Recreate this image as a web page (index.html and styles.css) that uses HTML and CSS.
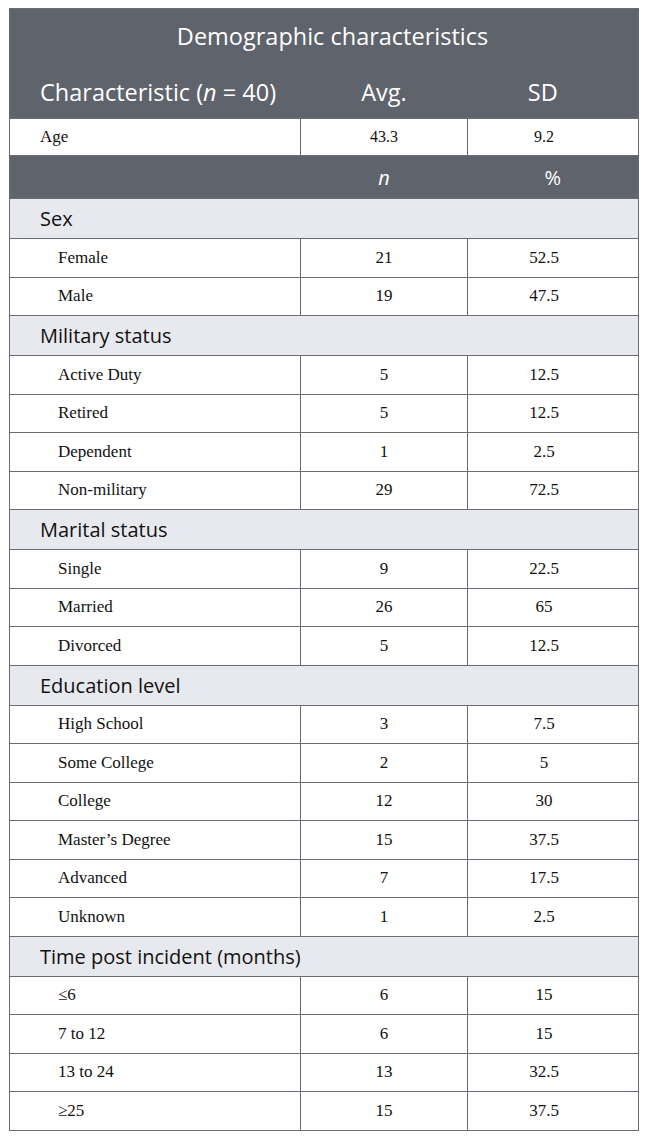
FILE: index.html
```html
<!DOCTYPE html>
<html lang="en">
<head>
<meta charset="utf-8">
<title>Demographic characteristics</title>
<link rel="stylesheet" href="styles.css">
</head>
<body>
<table class="demo">
  <colgroup>
    <col class="col1">
    <col class="col2">
    <col class="col3">
  </colgroup>
  <thead>
    <tr class="title-row"><th colspan="3">Demographic characteristics</th></tr>
    <tr class="head-row">
      <th class="c1">Characteristic (<i>n</i> = 40)</th>
      <th class="c2">Avg.</th>
      <th class="c3">SD</th>
    </tr>
  </thead>
  <tbody>
    <tr class="age-row"><td class="c1 top">Age</td><td class="c2">43.3</td><td class="c3">9.2</td></tr>
    <tr class="sub-head"><th class="c1"></th><th class="c2"><i>n</i></th><th class="c3">%</th></tr>

    <tr class="group"><td colspan="3">Sex</td></tr>
    <tr class="data"><td class="c1">Female</td><td class="c2">21</td><td class="c3">52.5</td></tr>
    <tr class="data"><td class="c1">Male</td><td class="c2">19</td><td class="c3">47.5</td></tr>

    <tr class="group"><td colspan="3">Military status</td></tr>
    <tr class="data"><td class="c1">Active Duty</td><td class="c2">5</td><td class="c3">12.5</td></tr>
    <tr class="data"><td class="c1">Retired</td><td class="c2">5</td><td class="c3">12.5</td></tr>
    <tr class="data"><td class="c1">Dependent</td><td class="c2">1</td><td class="c3">2.5</td></tr>
    <tr class="data"><td class="c1">Non-military</td><td class="c2">29</td><td class="c3">72.5</td></tr>

    <tr class="group"><td colspan="3">Marital status</td></tr>
    <tr class="data"><td class="c1">Single</td><td class="c2">9</td><td class="c3">22.5</td></tr>
    <tr class="data"><td class="c1">Married</td><td class="c2">26</td><td class="c3">65</td></tr>
    <tr class="data"><td class="c1">Divorced</td><td class="c2">5</td><td class="c3">12.5</td></tr>

    <tr class="group"><td colspan="3">Education level</td></tr>
    <tr class="data"><td class="c1">High School</td><td class="c2">3</td><td class="c3">7.5</td></tr>
    <tr class="data"><td class="c1">Some College</td><td class="c2">2</td><td class="c3">5</td></tr>
    <tr class="data"><td class="c1">College</td><td class="c2">12</td><td class="c3">30</td></tr>
    <tr class="data"><td class="c1">Master’s Degree</td><td class="c2">15</td><td class="c3">37.5</td></tr>
    <tr class="data"><td class="c1">Advanced</td><td class="c2">7</td><td class="c3">17.5</td></tr>
    <tr class="data"><td class="c1">Unknown</td><td class="c2">1</td><td class="c3">2.5</td></tr>

    <tr class="group"><td colspan="3">Time post incident (months)</td></tr>
    <tr class="data"><td class="c1">≤6</td><td class="c2">6</td><td class="c3">15</td></tr>
    <tr class="data"><td class="c1">7 to 12</td><td class="c2">6</td><td class="c3">15</td></tr>
    <tr class="data"><td class="c1">13 to 24</td><td class="c2">13</td><td class="c3">32.5</td></tr>
    <tr class="data"><td class="c1">≥25</td><td class="c2">15</td><td class="c3">37.5</td></tr>
  </tbody>
</table>
</body>
</html>
```

FILE: styles.css
```css
html, body {
  margin: 0;
  padding: 0;
  background: #ffffff;
}

body {
  padding: 8px 10px 0 9px;
}

.demo {
  width: 629px;
  border-collapse: collapse;
  table-layout: fixed;
  border: 1px solid #6a6d75;
  font-family: "Liberation Serif", "Times New Roman", serif;
  color: #111;
}

.col1 { width: 291px; }
.col2 { width: 167px; }
.col3 { width: 171px; }

.demo th, .demo td {
  padding: 0;
  white-space: nowrap;
}

.demo .c1 { text-align: left; }
.demo .c2 { text-align: center; }
.demo .c3 { text-align: center; padding-right: 18px; }

.demo thead th,
.demo .sub-head th {
  background: #5f636c;
  color: #ffffff;
  font-family: "Open Sans", "Noto Sans", sans-serif;
  font-weight: 400;
  border: none;
}

.title-row th {
  height: 53px;
  font-size: 23.5px;
  text-align: center;
  vertical-align: middle;
  padding: 0 0 3px 17px;
}

.head-row th {
  height: 53px;
  font-size: 23.5px;
  vertical-align: middle;
}

.head-row th.c1 {
  padding-left: 30px;
}

.head-row th.c3 {
  padding-right: 20px;
}

.demo i {
  font-style: italic;
}

.sub-head th {
  height: 42px;
  font-size: 20px;
  vertical-align: middle;
}

.sub-head th.c3 {
  padding-right: 0;
}

.demo td {
  border: 1px solid #6a6d75;
  font-size: 17px;
  vertical-align: middle;
}

.age-row td {
  height: 36px;
  font-size: 16px;
}

.age-row td.top {
  padding-left: 30px;
  font-size: 17px;
}

.group td {
  height: 39px;
  background: #e8e9ee;
  font-family: "Open Sans", "Noto Sans", sans-serif;
  font-size: 20px;
  color: #111;
  padding-left: 30px;
}

.data td {
  height: 37.5px;
}

.data td.c1 {
  padding-left: 48px;
}
```
